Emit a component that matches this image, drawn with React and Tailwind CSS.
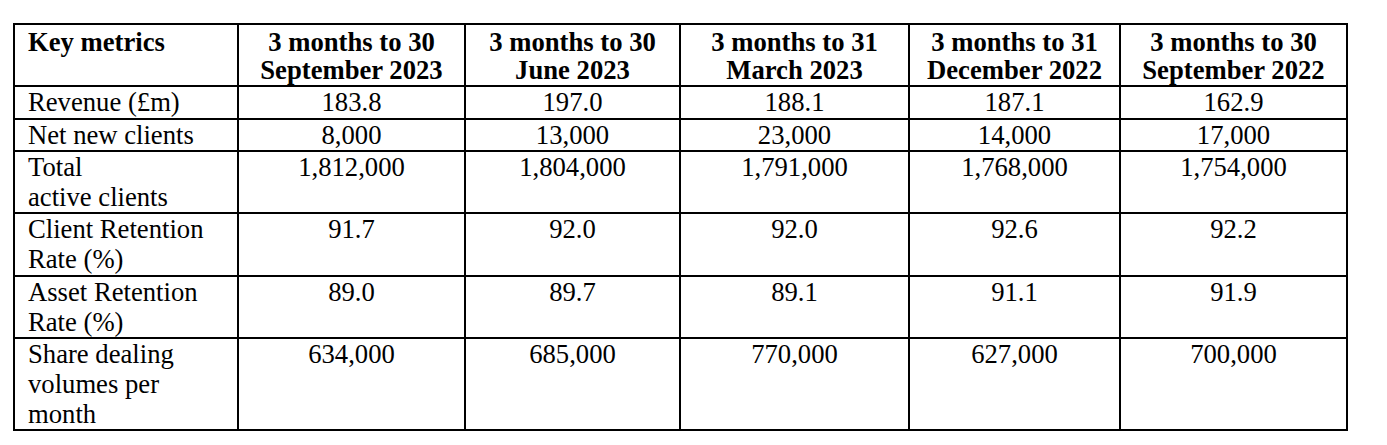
import React from 'react';

const headers = [
  ['3 months to 30', 'September 2023'],
  ['3 months to 30', 'June 2023'],
  ['3 months to 31', 'March 2023'],
  ['3 months to 31', 'December 2022'],
  ['3 months to 30', 'September 2022'],
];

const rows = [
  { label: ['Revenue (£m)'], h: 'h-[33px]', values: ['183.8', '197.0', '188.1', '187.1', '162.9'] },
  { label: ['Net new clients'], h: 'h-[32px]', values: ['8,000', '13,000', '23,000', '14,000', '17,000'] },
  { label: ['Total', 'active clients'], h: 'h-[60px]', values: ['1,812,000', '1,804,000', '1,791,000', '1,768,000', '1,754,000'] },
  { label: ['Client Retention', 'Rate (%)'], h: 'h-[63px]', values: ['91.7', '92.0', '92.0', '92.6', '92.2'] },
  { label: ['Asset Retention', 'Rate (%)'], h: 'h-[61px]', values: ['89.0', '89.7', '89.1', '91.1', '91.9'] },
  { label: ['Share dealing', 'volumes per', 'month'], h: 'h-[91px]', values: ['634,000', '685,000', '770,000', '627,000', '700,000'] },
];

export default function App() {
  return (
    <div className="min-h-screen bg-white pt-[23px] pl-[13px] text-black" style={{ fontFamily: '"Liberation Serif", "Times New Roman", serif' }}>
      <table className="border-collapse table-fixed w-[1333px] text-[26.67px] leading-[30px]">
        <colgroup>
          <col className="w-[224px]" />
          <col className="w-[227px]" />
          <col className="w-[215px]" />
          <col className="w-[229px]" />
          <col className="w-[211px]" />
          <col className="w-[227px]" />
        </colgroup>
        <thead>
          <tr className="h-[62px]">
            <th className="border-2 border-black align-top text-left font-bold pl-[13px] pt-[3px] leading-[28px]">Key metrics</th>
            {headers.map((h, i) => (
              <th key={i} className="border-2 border-black align-top text-center font-bold pt-[3px] leading-[28px]">
                {h[0]}
                <br />
                {h[1]}
              </th>
            ))}
          </tr>
        </thead>
        <tbody>
          {rows.map((r, i) => (
            <tr key={i} className={r.h}>
              <td className="border-2 border-black align-top text-left pl-[13px] p-0">
                {r.label.map((l, j) => (
                  <div key={j}>{l}</div>
                ))}
              </td>
              {r.values.map((v, j) => (
                <td key={j} className="border-2 border-black align-top text-center p-0">
                  {v}
                </td>
              ))}
            </tr>
          ))}
        </tbody>
      </table>
    </div>
  );
}
